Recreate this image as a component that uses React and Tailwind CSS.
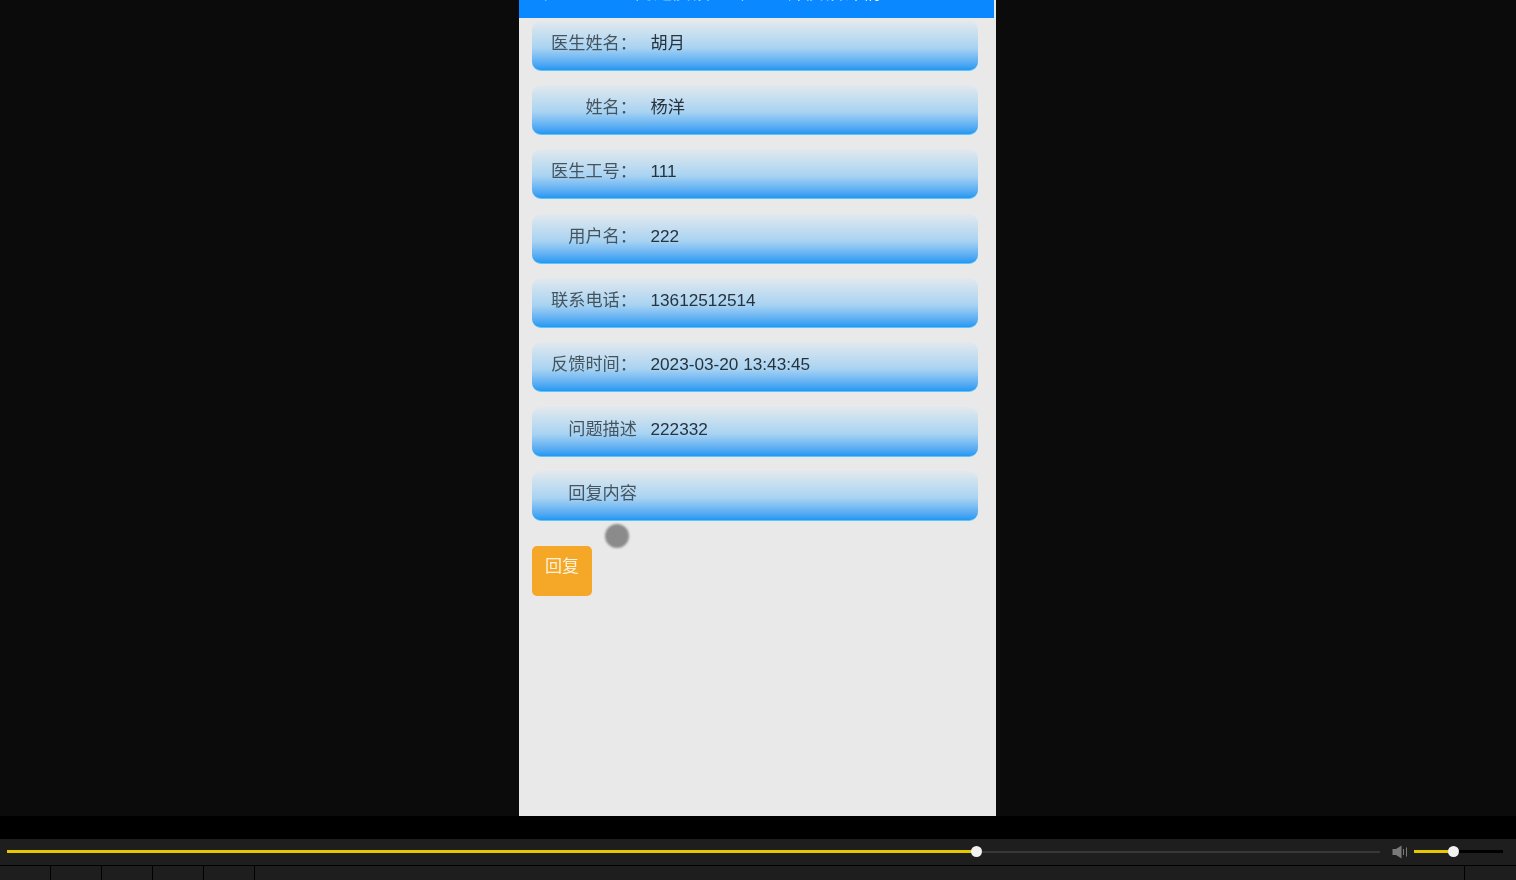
import React from 'react';
import { ChevronLeft } from 'lucide-react';

const rows = [
    { label: '医生姓名：', value: '胡月' },
    { label: '姓名：', value: '杨洋' },
    { label: '医生工号：', value: '111' },
    { label: '用户名：', value: '222' },
    { label: '联系电话：', value: '13612512514' },
    { label: '反馈时间：', value: '2023-03-20 13:43:45' },
    { label: '问题描述', value: '222332' },
    { label: '回复内容', value: '' },
];

const App = () => {
    return (
        <div className="flex h-[880px] flex-col overflow-hidden bg-black font-['Liberation_Sans','Noto_Sans_CJK_SC',sans-serif]">
            {/* video area */}
            <div className="flex h-[816px] bg-[#0b0b0b]">
                <div className="w-[519px]" />
                <div className="relative flex w-[477px] flex-col bg-[#e9e9e9]">
                    <div className="mr-[2px] flex h-[18px] items-end overflow-hidden bg-[#0a88ff] text-white blur-[0.6px]">
                        <ChevronLeft size={22} className="mb-[13px] ml-[13px] shrink-0" />
                        <div className="mb-[14px] ml-[81px] whitespace-nowrap text-[18px] leading-[22px] tracking-[1px]">问题反馈 - 专业医师反馈详情</div>
                    </div>
                    <div className="flex flex-col gap-[14.35px] pt-[2.5px] pl-[13px] pr-[18px] blur-[0.6px]">
                        {rows.map((row, i) => (
                            <div
                                key={i}
                                className="flex h-[50px] items-start rounded-[9px] border-b border-[#5cc4fa] bg-gradient-to-b from-[#e2e9ed] via-[#a8d3f2] via-55% to-[#1f98f2] pt-[11px] text-[17.2px] leading-[23px]"
                            >
                                <div className="w-[105px] shrink-0 text-right text-[#45545f]">{row.label}</div>
                                <div className="ml-[13.5px] text-[#27333e]">{row.value}</div>
                            </div>
                        ))}
                    </div>
                    <button className="mt-[25px] ml-[13px] flex h-[50px] w-[60px] justify-center rounded-[5px] bg-[#f5a728] pt-[9px] text-[17px] leading-6 text-[#fdf3dc] blur-[0.6px]">
                        回复
                    </button>
                    {/* touch indicator */}
                    <div className="absolute top-[524px] left-[86px] h-6 w-6 rounded-full bg-[#8b8b8b] blur-[0.8px]" />
                </div>
                <div className="flex-1" />
            </div>

            <div className="h-[23px] bg-black" />

            {/* player controls */}
            <div className="flex h-[26px] items-center bg-[#1e1e1e] pb-[1px] pl-[7px]">
                <div className="h-[3px] w-[965px] bg-[#e6c800]" />
                <div className="z-10 -mx-[1px] h-[11px] w-[11px] shrink-0 rounded-full bg-[#f2f2f2]" />
                <div className="h-[2px] w-[399px] bg-[#383838]" />
                <svg width="16" height="14" viewBox="0 0 16 14" className="ml-[12px] shrink-0">
                    <path d="M0.500 4h3.500L9.500 0.500v13L4 10H0.500z" fill="#7a7a7a" />
                    <path d="M11.500 4v6M14.500 2.500v9" stroke="#7a7a7a" strokeWidth="1" />
                </svg>
                <div className="ml-[6px] h-[3px] w-[35px] bg-[#e6c800]" />
                <div className="z-10 -mx-[1px] h-[11px] w-[11px] shrink-0 rounded-full bg-[#f2f2f2]" />
                <div className="h-[3px] w-[45px] bg-black" />
            </div>

            <div className="flex h-[15px] gap-px border-t border-black">
                <div className="w-[50px] bg-[#1e1e1e]" />
                <div className="w-[50px] bg-[#1e1e1e]" />
                <div className="w-[50px] bg-[#1e1e1e]" />
                <div className="w-[50px] bg-[#1e1e1e]" />
                <div className="w-[50px] bg-[#1e1e1e]" />
                <div className="w-[1209px] bg-[#1e1e1e]" />
                <div className="flex-1 bg-[#1e1e1e]" />
            </div>
        </div>
    );
};

export default App;
